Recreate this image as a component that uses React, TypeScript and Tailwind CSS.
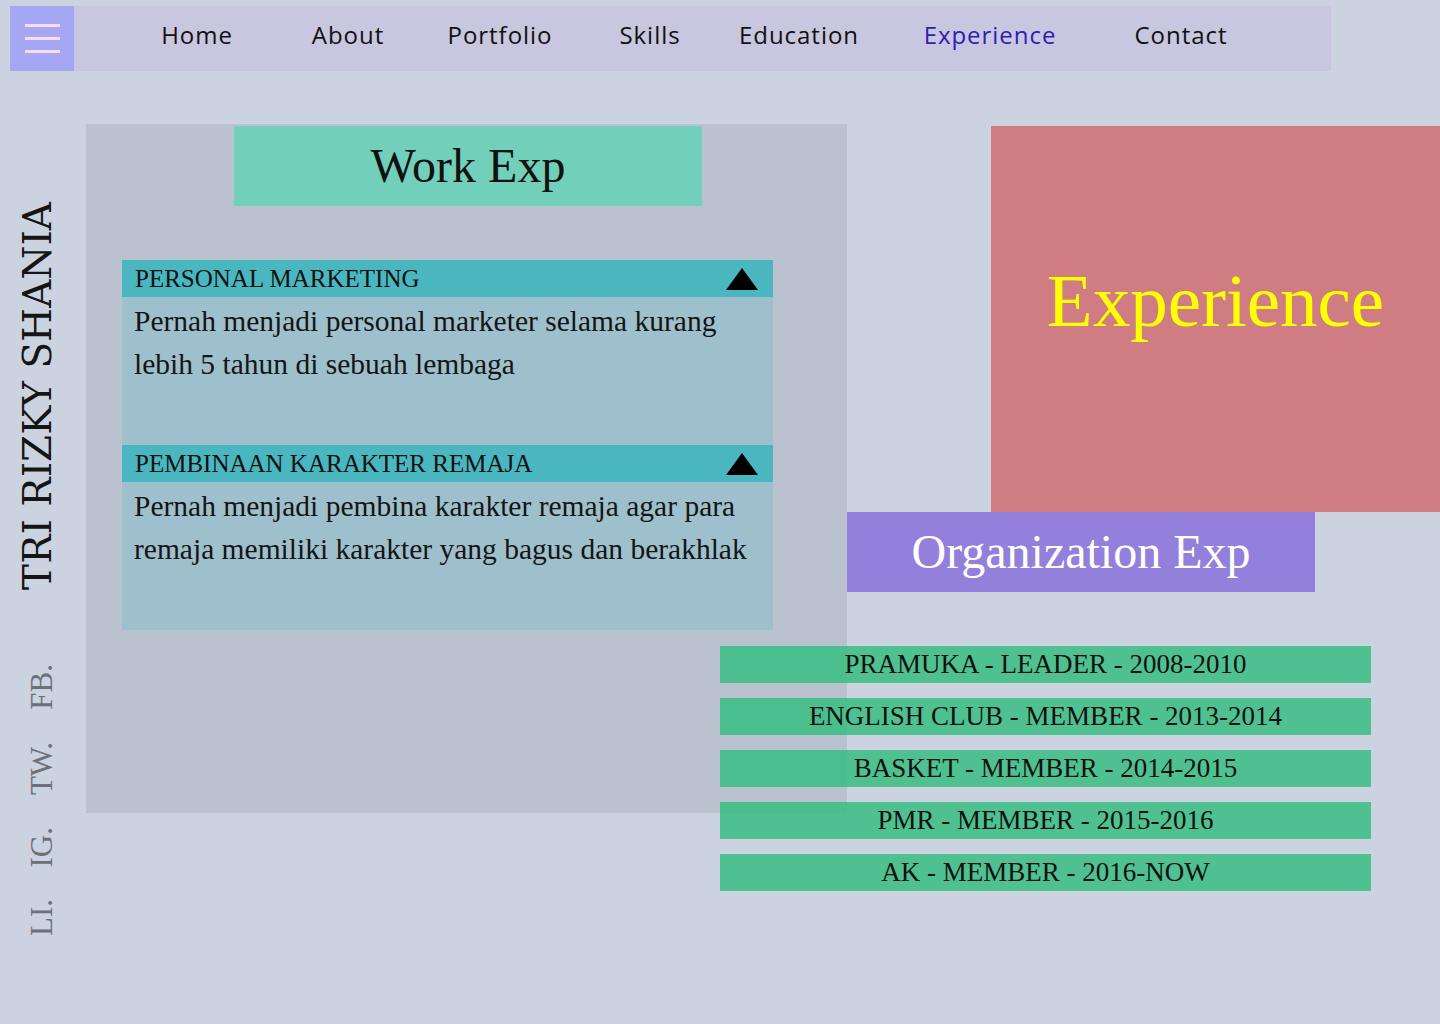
import { Fragment } from "react";

const navItems = [
  { label: "Home", width: "w-[150px]", active: false },
  { label: "About", width: "w-[152px]", active: false },
  { label: "Portfolio", width: "w-[152px]", active: false },
  { label: "Skills", width: "w-[148px]", active: false },
  { label: "Education", width: "w-[150px]", active: false },
  { label: "Experience", width: "w-[232px]", active: true },
  { label: "Contact", width: "w-[150px]", active: false },
];

const workItems = [
  {
    title: "PERSONAL MARKETING",
    body: "Pernah menjadi personal marketer selama kurang lebih 5 tahun di sebuah lembaga",
  },
  {
    title: "PEMBINAAN KARAKTER REMAJA",
    body: "Pernah menjadi pembina karakter remaja agar para remaja memiliki karakter yang bagus dan berakhlak",
  },
];

const organizations = [
  "PRAMUKA - LEADER - 2008-2010",
  "ENGLISH CLUB - MEMBER - 2013-2014",
  "BASKET - MEMBER - 2014-2015",
  "PMR - MEMBER - 2015-2016",
  "AK - MEMBER - 2016-NOW",
];

const socials = ["FB.", "TW.", "IG.", "LI."];

const serif = "font-['Liberation_Serif',serif]";

function Hamburger() {
  return (
    <div className="flex h-[65px] w-[64px] flex-col items-center justify-center gap-[10px] bg-[#a5a7f4]">
      <span className="h-[3px] w-[35px] bg-[#f6dcef]" />
      <span className="h-[3px] w-[35px] bg-[#f6dcef]" />
      <span className="h-[3px] w-[35px] bg-[#f6dcef]" />
    </div>
  );
}

function Triangle() {
  return (
    <svg width="32" height="22" viewBox="0 0 32 22" aria-hidden>
      <polygon points="16,0 32,22 0,22" fill="#000" />
    </svg>
  );
}

export default function App() {
  return (
    <div className="min-h-screen overflow-hidden bg-[#ccd3e0] pt-[6px]">
      {/* navbar */}
      <nav className="ml-[10px] flex h-[65px] w-[1321px] items-center bg-[#c9c6df]">
        <Hamburger />
        <ul className="ml-[48px] flex items-center pb-[8px] font-['Open_Sans',sans-serif] text-[24px] tracking-[0.04em] text-[#111]">
          {navItems.map((item) => (
            <li
              key={item.label}
              className={`${item.width} text-center ${item.active ? "text-[#2e1eb3]" : ""}`}
            >
              {item.label}
            </li>
          ))}
        </ul>
      </nav>

      <div className="mt-[53px] flex">
        {/* sidebar */}
        <aside className="flex w-[86px] flex-col items-center pt-[78px]">
          <p className="rotate-180 pl-[12px] font-['DejaVu_Serif',serif] text-[39px] leading-none text-[#151515] [writing-mode:vertical-rl]">
            TRI RIZKY SHANIA
          </p>
          <div className="mt-[74px] flex flex-col items-center gap-[32px] pr-[4px]">
            {socials.map((s) => (
              <span
                key={s}
                className={`rotate-180 ${serif} text-[31px] leading-none text-[#6d7078] [writing-mode:vertical-rl]`}
              >
                {s}
              </span>
            ))}
          </div>
        </aside>

        {/* work experience panel */}
        <section className="h-[689px] w-[761px] shrink-0 bg-[#bac1cf] pt-[2px]">
          <div className="ml-[148px] flex h-[80px] w-[468px] items-center justify-center bg-[#72cfb9]">
            <h2 className={`${serif} text-[48px] text-[#111]`}>Work Exp</h2>
          </div>

          <div className="ml-[36px] mt-[54px] w-[651px]">
            {workItems.map((item) => (
              <Fragment key={item.title}>
                <div className="flex h-[37px] items-center justify-between bg-[#4ab6c0] pl-[13px] pr-[15px]">
                  <span className={`${serif} text-[25px] leading-none text-[#111]`}>{item.title}</span>
                  <Triangle />
                </div>
                <div className="h-[148px] bg-[#9ebfcc] px-[12px] pt-[3px]">
                  <p className={`${serif} text-[29.5px] leading-[43px] text-[#151515]`}>{item.body}</p>
                </div>
              </Fragment>
            ))}
          </div>
        </section>

        {/* right column */}
        <div className="relative flex-1">
          <div className="ml-[144px] mt-[2px] h-[386px] bg-[#d07c83] pt-[137px] text-center">
            <h1 className={`${serif} text-[75px] leading-none text-[#ffff00]`}>Experience</h1>
          </div>
          <div className="flex h-[80px] w-[468px] items-center justify-center bg-[#937fdc]">
            <h2 className={`${serif} text-[48px] text-white`}>Organization Exp</h2>
          </div>

          <ul className="relative ml-[-127px] mt-[54px] flex w-[651px] flex-col gap-[15px]">
            {organizations.map((org) => (
              <li
                key={org}
                className={`flex h-[37px] items-center justify-center bg-[rgba(53,189,129,0.83)] ${serif} text-[27px] leading-none text-[#111]`}
              >
                {org}
              </li>
            ))}
          </ul>
        </div>
      </div>
    </div>
  );
}
